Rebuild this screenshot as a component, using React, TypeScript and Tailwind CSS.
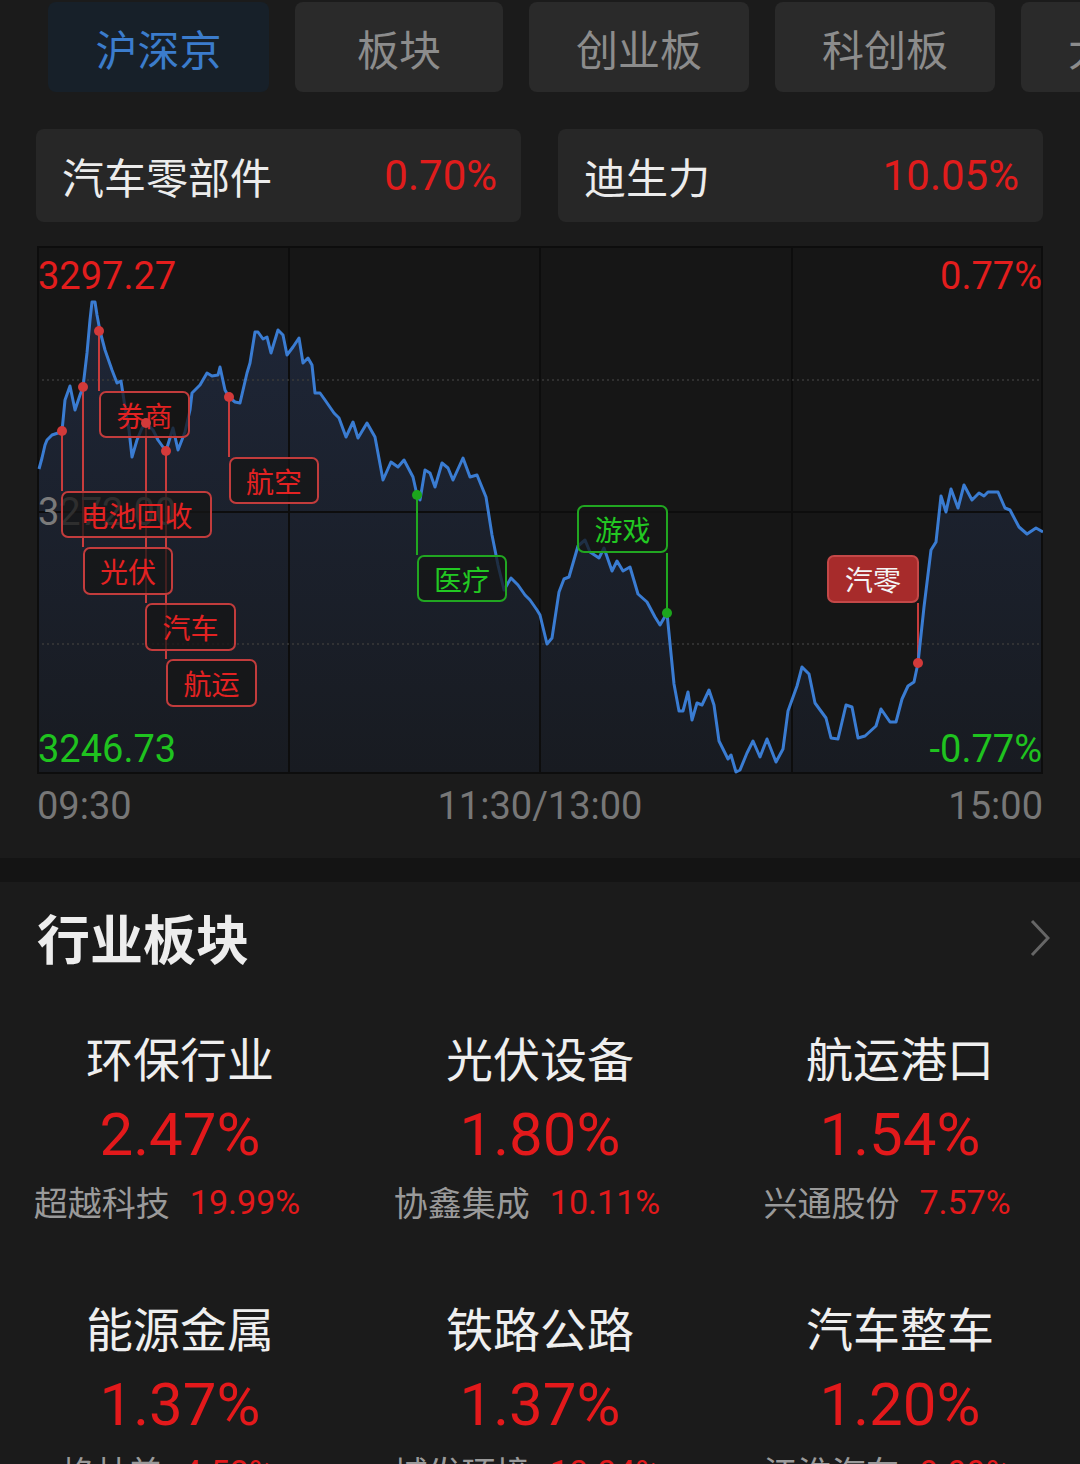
import React from "react";

const CJK = "font-['Noto_Sans_CJK_SC',sans-serif]";
const NUM = "font-['Roboto','Noto_Sans_CJK_SC',sans-serif]";

const linePts: [number, number][] = [
  [39, 469], [42, 458], [45, 445], [47, 440], [52, 435], [58, 433], [62, 431], [65, 400], [70, 386], [75, 410], [80, 395], [83, 387],
  [87, 353], [90, 320], [92, 302], [95, 302], [97, 315], [100, 331], [105, 350], [112, 370], [117, 383], [121, 381], [125, 407],
  [129, 430], [132, 457], [137, 440], [142, 428], [146, 423], [153, 430], [158, 440], [163, 447], [166, 451], [173, 428], [178, 450],
  [185, 432], [190, 410], [192, 393], [200, 385], [207, 373], [212, 376], [218, 375], [220, 367], [225, 390], [229, 397], [235, 402],
  [240, 403], [247, 373], [250, 363], [255, 332], [258, 332], [263, 339], [267, 337], [271, 353], [278, 330], [283, 335], [287, 355],
  [293, 347], [299, 338], [303, 363], [308, 358], [312, 365], [315, 393], [320, 393], [325, 400], [334, 413], [339, 418], [346, 437],
  [353, 422], [358, 438], [367, 423], [375, 437], [383, 480], [391, 462], [398, 467], [404, 460], [413, 477], [417, 495], [420, 500],
  [425, 470], [430, 473], [435, 487], [442, 463], [448, 468], [453, 480], [463, 458], [470, 477], [477, 475], [486, 497], [492, 535],
  [498, 565], [504, 590], [511, 578], [518, 585], [525, 595], [530, 600], [537, 610], [540, 615], [547, 644], [552, 638], [559, 592],
  [564, 579], [569, 577], [578, 546], [585, 540], [590, 552], [599, 558], [604, 548], [612, 571], [617, 561], [623, 571], [630, 567],
  [638, 594], [647, 602], [655, 617], [660, 625], [667, 613], [674, 684], [679, 711], [683, 711], [688, 692], [692, 720], [697, 703],
  [702, 705], [709, 690], [714, 705], [719, 741], [728, 759], [731, 755], [736, 772], [740, 770], [747, 753], [753, 741], [760, 757],
  [767, 739], [776, 762], [783, 749], [788, 711], [797, 686], [802, 667], [809, 674], [815, 703], [826, 718], [831, 738], [838, 739],
  [846, 705], [852, 707], [858, 738], [865, 736], [876, 726], [881, 709], [890, 722], [896, 722], [902, 699], [908, 686], [914, 682],
  [918, 663], [924, 607], [931, 550], [936, 542], [941, 496], [946, 512], [951, 489], [958, 508], [964, 485], [972, 500], [979, 493],
  [984, 496], [988, 492], [998, 492], [1005, 508], [1010, 510], [1019, 527], [1027, 534], [1036, 528], [1043, 532],
];

const lineStr = linePts.map((p) => p.join(",")).join(" ");
const fillStr = lineStr + " 1043,773 39,773";

const RED_LINE = "#c83c3c";
const GREEN_LINE = "#20a820";

const connectors = [
  { x: 99, y1: 331, y2: 391, c: RED_LINE },
  { x: 62, y1: 431, y2: 491, c: RED_LINE },
  { x: 83, y1: 387, y2: 547, c: RED_LINE },
  { x: 146, y1: 423, y2: 603, c: RED_LINE },
  { x: 166, y1: 451, y2: 659, c: RED_LINE },
  { x: 229, y1: 397, y2: 457, c: RED_LINE },
  { x: 417, y1: 495, y2: 555, c: GREEN_LINE },
  { x: 667, y1: 553, y2: 613, c: GREEN_LINE },
  { x: 918, y1: 603, y2: 663, c: RED_LINE },
];

const dots = [
  { x: 99, y: 331, c: "#d23a3a" },
  { x: 62, y: 431, c: "#d23a3a" },
  { x: 83, y: 387, c: "#d23a3a" },
  { x: 146, y: 423, c: "#d23a3a" },
  { x: 166, y: 451, c: "#d23a3a" },
  { x: 229, y: 397, c: "#d23a3a" },
  { x: 417, y: 495, c: "#1ca61c" },
  { x: 667, y: 613, c: "#1ca61c" },
  { x: 918, y: 663, c: "#d23a3a" },
];

function Tab({ label, active, w }: { label: string; active?: boolean; w: string }) {
  return (
    <div
      className={`${w} h-[90px] shrink-0 rounded-[8px] flex items-center justify-center text-[42px] ${CJK} ${
        active ? "bg-[#172029] text-[#3b7ccc]" : "bg-[#2a2a2a] text-[#8c8c8c]"
      }`}
    >
      {label}
    </div>
  );
}

function Card({ name, pct }: { name: string; pct: string }) {
  return (
    <div className="w-[485px] h-[93px] rounded-[8px] bg-[#272727] flex items-center justify-between pl-[26px] pr-[24px]">
      <span className={`text-[42px] text-[#ececec] ${CJK}`}>{name}</span>
      <span className={`text-[42px] text-[#e01c1c] ${NUM}`}>{pct}</span>
    </div>
  );
}

function Cell({ name, pct, sub, subPct }: { name: string; pct: string; sub: string; subPct: string }) {
  return (
    <div className="flex flex-col items-center">
      <div className={`text-[47px] leading-[52px] text-[#efefef] ${CJK}`}>{name}</div>
      <div className={`mt-[19px] text-[60px] leading-[66px] text-[#e3191b] ${NUM}`}>{pct}</div>
      <div className="mt-[14px] flex items-center pr-[26px] leading-[40px]">
        <span className={`text-[34px] text-[#9a9a9a] ${CJK}`}>{sub}</span>
        <span className={`ml-[20px] text-[34px] text-[#e3191b] ${NUM}`}>{subPct}</span>
      </div>
    </div>
  );
}

function Chart() {
  return (
    <div className="relative ml-[37px] w-[1006px] h-[528px] bg-[#161616]">
      <svg className="absolute inset-0" width={1006} height={528} viewBox="37 246 1006 528">
        <defs>
          <linearGradient id="fillg" x1="0" y1="0" x2="0" y2="1" gradientUnits="objectBoundingBox">
            <stop offset="0%" stopColor="#1e2637" />
            <stop offset="100%" stopColor="#181b21" />
          </linearGradient>
        </defs>
        <polygon points={fillStr} fill="url(#fillg)" />
        <line x1={289} y1={246} x2={289} y2={774} stroke="#0d0d0d" strokeWidth={2} />
        <line x1={540} y1={246} x2={540} y2={774} stroke="#0d0d0d" strokeWidth={2} />
        <line x1={792} y1={246} x2={792} y2={774} stroke="#0d0d0d" strokeWidth={2} />
        <line x1={37} y1={512} x2={1043} y2={512} stroke="#0d0d0d" strokeWidth={2} />
        <line x1={37} y1={380} x2={1043} y2={380} stroke="#3a3a3a" strokeWidth={1.5} strokeDasharray="2 3" />
        <line x1={37} y1={644} x2={1043} y2={644} stroke="#3a3a3a" strokeWidth={1.5} strokeDasharray="2 3" />
        <rect x={38} y={247} width={1004} height={526} fill="none" stroke="#0d0d0d" strokeWidth={2} />
        {connectors.map((c, i) => (
          <line key={i} x1={c.x} y1={c.y1} x2={c.x} y2={c.y2} stroke={c.c} strokeWidth={2} />
        ))}
        <polyline points={lineStr} fill="none" stroke="#3a7cd2" strokeWidth={3} strokeLinejoin="round" />
      </svg>

      <div className={`absolute left-[1px] top-[8px] text-[38px] leading-[44px] text-[#e31d1d] ${NUM}`}>3297.27</div>
      <div className={`absolute right-[1px] top-[8px] text-[38px] leading-[44px] text-[#e31d1d] ${NUM}`}>0.77%</div>
      <div className={`absolute left-[1px] top-[244px] text-[38px] leading-[44px] text-[#7a7a7a] ${NUM}`}>3272.00</div>
      <div className={`absolute left-[1px] top-[481px] text-[38px] leading-[44px] text-[#1fc31f] ${NUM}`}>3246.73</div>
      <div className={`absolute right-[1px] top-[481px] text-[38px] leading-[44px] text-[#1fc31f] ${NUM}`}>-0.77%</div>

      <div className={`absolute left-[62px] top-[145px] w-[91px] h-[47px] rounded-[7px] border-2 border-[#c23c3c] bg-[#161616]/75 flex items-center justify-center text-[28px] text-[#e32222] ${CJK}`}>券商</div>
      <div className={`absolute left-[24px] top-[245px] w-[151px] h-[47px] rounded-[7px] border-2 border-[#c23c3c] bg-[#161616]/75 flex items-center justify-center text-[28px] text-[#e32222] ${CJK}`}>电池回收</div>
      <div className={`absolute left-[46px] top-[301px] w-[90px] h-[48px] rounded-[7px] border-2 border-[#c23c3c] bg-[#161616]/75 flex items-center justify-center text-[28px] text-[#e32222] ${CJK}`}>光伏</div>
      <div className={`absolute left-[108px] top-[357px] w-[91px] h-[48px] rounded-[7px] border-2 border-[#c23c3c] bg-[#161616]/75 flex items-center justify-center text-[28px] text-[#e32222] ${CJK}`}>汽车</div>
      <div className={`absolute left-[129px] top-[413px] w-[91px] h-[48px] rounded-[7px] border-2 border-[#c23c3c] bg-[#161616]/75 flex items-center justify-center text-[28px] text-[#e32222] ${CJK}`}>航运</div>
      <div className={`absolute left-[192px] top-[211px] w-[90px] h-[47px] rounded-[7px] border-2 border-[#c23c3c] bg-[#161616]/75 flex items-center justify-center text-[28px] text-[#e32222] ${CJK}`}>航空</div>
      <div className={`absolute left-[380px] top-[309px] w-[90px] h-[47px] rounded-[7px] border-2 border-[#21a621] bg-[#161616]/75 flex items-center justify-center text-[28px] text-[#22c822] ${CJK}`}>医疗</div>
      <div className={`absolute left-[540px] top-[259px] w-[91px] h-[48px] rounded-[7px] border-2 border-[#21a621] bg-[#161616]/75 flex items-center justify-center text-[28px] text-[#22c822] ${CJK}`}>游戏</div>
      <div className={`absolute left-[790px] top-[309px] w-[92px] h-[48px] rounded-[7px] border-2 border-[#c44848] bg-[#a72b2b] flex items-center justify-center text-[28px] text-[#f4f4f4] ${CJK}`}>汽零</div>

      <svg className="absolute inset-0 pointer-events-none" width={1006} height={528} viewBox="37 246 1006 528">
        {dots.map((d, i) => (
          <circle key={i} cx={d.x} cy={d.y} r={5} fill={d.c} />
        ))}
      </svg>
    </div>
  );
}

export default function App() {
  return (
    <div className="w-[1080px] h-[1464px] overflow-hidden bg-[#1b1b1b]">
      <div className="flex gap-[26px] pl-[48px] pt-[2px] overflow-hidden">
        <Tab label="沪深京" active w="w-[221px]" />
        <Tab label="板块" w="w-[208px]" />
        <Tab label="创业板" w="w-[220px]" />
        <Tab label="科创板" w="w-[220px]" />
        <Tab label="大数据" w="w-[220px]" />
      </div>

      <div className="flex gap-[37px] pl-[36px] mt-[37px]">
        <Card name="汽车零部件" pct="0.70%" />
        <Card name="迪生力" pct="10.05%" />
      </div>

      <div className="mt-[24px]">
        <Chart />
      </div>

      <div className={`mt-[4px] h-[42px] ml-[37px] w-[1006px] grid grid-cols-3 items-center text-[38px] text-[#777777] ${NUM}`}>
        <span className="text-left">09:30</span>
        <span className="text-center">11:30/13:00</span>
        <span className="text-right">15:00</span>
      </div>

      <div className="mt-[38px] h-[24px] bg-[#141414]" />

      <div className="pt-[28px]">
        <div className="flex items-center justify-between pl-[37px] pr-[30px] h-[56px]">
          <span className={`text-[53px] font-semibold text-[#ededed] ${CJK}`}>行业板块</span>
          <svg width="20" height="38" viewBox="0 0 20 38">
            <polyline points="2,2 18,19 2,36" fill="none" stroke="#666666" strokeWidth={3} />
          </svg>
        </div>
        <div className="mt-[65px] grid grid-cols-3 gap-y-[79px]">
          <Cell name="环保行业" pct="2.47%" sub="超越科技" subPct="19.99%" />
          <Cell name="光伏设备" pct="1.80%" sub="协鑫集成" subPct="10.11%" />
          <Cell name="航运港口" pct="1.54%" sub="兴通股份" subPct="7.57%" />
          <Cell name="能源金属" pct="1.37%" sub="格林美" subPct="4.58%" />
          <Cell name="铁路公路" pct="1.37%" sub="城发环境" subPct="10.04%" />
          <Cell name="汽车整车" pct="1.20%" sub="江淮汽车" subPct="9.99%" />
        </div>
      </div>
    </div>
  );
}
